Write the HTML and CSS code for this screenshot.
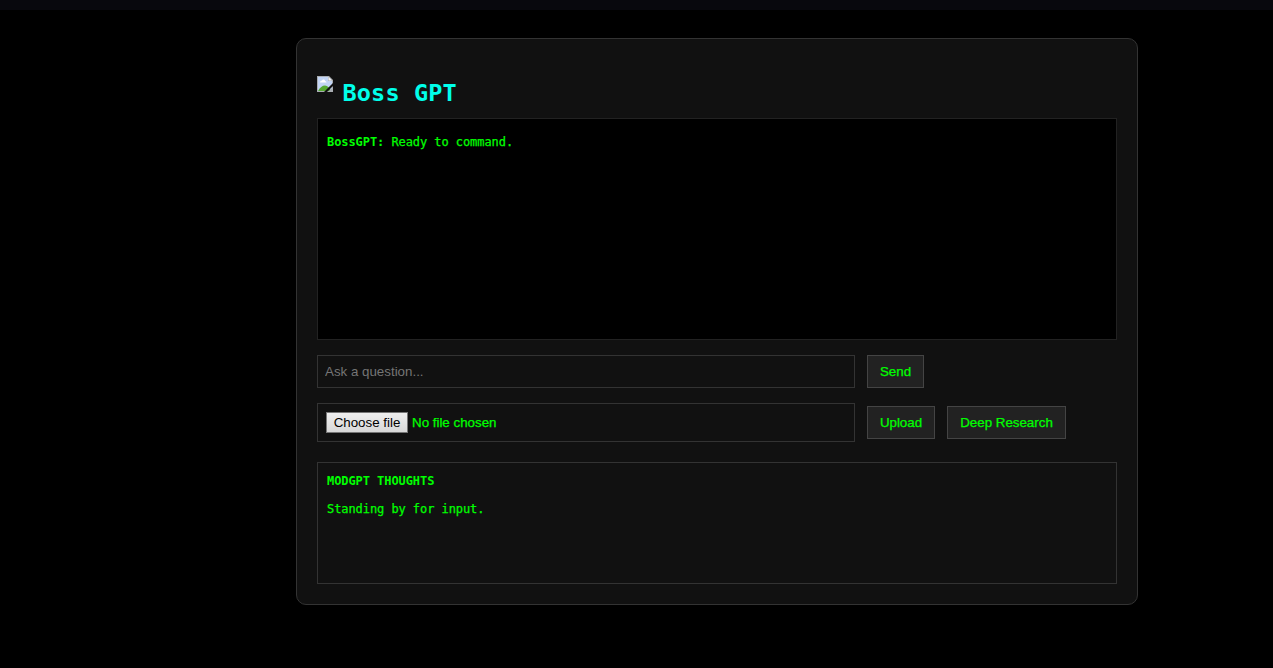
FILE: index.html
```html
<!DOCTYPE html>
<html lang="en">
<head>
<meta charset="utf-8">
<title>Boss GPT</title>
<link rel="stylesheet" href="styles.css">
</head>
<body>
<div class="topbar"></div>
<main class="panel">
  <h1 class="title">
    <svg class="logo" viewBox="0 0 16 16" width="16" height="16">
      <path d="M0 0H12L16 4V16H0Z" fill="#a9adb2"/>
      <path d="M1 1H11V5H15V15H1Z" fill="#c3d5f5"/>
      <path d="M3 6.500Q3 4.500 5 4.500Q5.500 3 7 3.500Q8 3.500 8 5Q9.500 5 9.500 6.500Z" fill="#fff"/>
      <path d="M1 15Q4 9.500 8 9.500Q12 10 14 15Z" fill="#55a832"/>
      <path d="M11.500 1L15 4.500H11.500Z" fill="#f4f4f4"/>
      <path d="M16 7V10L10 16H7L10.500 12.500L14 9Z" fill="#111"/>
      <path d="M11 16L16 11V16Z" fill="#a9adb2"/>
    </svg>
    <span>Boss GPT</span>
  </h1>
  <section class="chat"><b>BossGPT:</b> Ready to command.</section>
  <div class="row ask">
    <input class="field" type="text" placeholder="Ask a question...">
    <button class="btn send">Send</button>
  </div>
  <div class="row upload">
    <div class="field file"><button class="choose">Choose file</button><span class="status">No file chosen</span></div>
    <button class="btn up">Upload</button>
    <button class="btn deep">Deep Research</button>
  </div>
  <section class="thoughts">
    <b>MODGPT THOUGHTS</b>
    <p>Standing by for input.</p>
  </section>
</main>
</body>
</html>
```
FILE: styles.css
```css
* { box-sizing: border-box; }
body {
  margin: 0;
  height: 668px;
  overflow: hidden;
  background: #000;
  color: #0f0;
  font: 12px/16px "DejaVu Sans Mono", monospace;
  letter-spacing: -0.07px;
}
.topbar { height: 10px; background: #08080d; }
.panel {
  width: 842px;
  height: 567px;
  margin: 28px 0 0 296px;
  padding: 37px 20px 20px;
  background: #111;
  border: 1px solid #333;
  border-radius: 10px;
}
.title {
  display: flex;
  gap: 9.5px;
  height: 42px;
  margin: 0;
  color: #00ffea;
  font-size: 23.5px;
  line-height: 34px;
  letter-spacing: 0.15px;
}
.logo { flex: none; }
.chat {
  height: 222px;
  padding: 15px 9px;
  background: #000;
  border: 1px solid #222;
}
.chat, .thoughts p, .btn, .status { -webkit-text-stroke: 0.25px #0f0; }
.chat b { -webkit-text-stroke: 0; }
.row {
  display: flex;
  align-items: center;
  gap: 12px;
  margin-top: 15px;
  font: 13.333px/15px "Liberation Sans", Arial, sans-serif;
  letter-spacing: 0;
}
.field {
  width: 538px;
  height: 33px;
  padding: 8px 7px;
  background: #111;
  border: 1px solid #333;
  color: #0f0;
  font: inherit;
}
.field::placeholder { color: #757575; opacity: 1; }
.file {
  display: flex;
  align-items: center;
  gap: 4px;
  height: 39px;
  padding: 0 8px;
}
.choose {
  width: 82px;
  height: 21px;
  padding: 0;
  border: 1px solid #767676;
  background: linear-gradient(#eee, #d8d8d8);
  color: #000;
  font: inherit;
}
.btn {
  height: 33px;
  padding: 0;
  background: #222;
  border: 1px solid #444;
  color: #0f0;
  font: inherit;
}
.send { width: 57px; }
.up { width: 68px; }
.deep { width: 119px; }
.thoughts {
  height: 122px;
  margin-top: 20px;
  padding: 10px 9px;
  border: 1px solid #333;
}
.thoughts p { margin: 12px 0 0; }
```
